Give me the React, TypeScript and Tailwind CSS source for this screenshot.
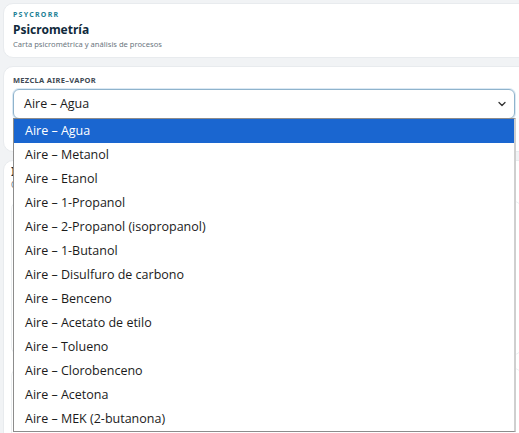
import { ChevronDown } from "lucide-react";

const mezclas = [
  "Aire – Agua",
  "Aire – Metanol",
  "Aire – Etanol",
  "Aire – 1-Propanol",
  "Aire – 2-Propanol (isopropanol)",
  "Aire – 1-Butanol",
  "Aire – Disulfuro de carbono",
  "Aire – Benceno",
  "Aire – Acetato de etilo",
  "Aire – Tolueno",
  "Aire – Clorobenceno",
  "Aire – Acetona",
  "Aire – MEK (2-butanona)",
];

export default function App() {
  return (
    <div className="relative w-[519px] h-[433px] overflow-hidden bg-[#f1f3f5] font-['Noto_Sans',sans-serif]">
      <div className="w-[530px] pl-[3px] pt-[3px] flex flex-col gap-[8px]">
        {/* header */}
        <div className="h-[55px] bg-white rounded-[10px] border border-[#e8ebee] px-[9px] pt-[6px]">
          <div className="text-[7px] font-bold tracking-[0.18em] text-[#1c7f95] leading-[10px]">PSYCRORR</div>
          <h1 className="mt-[2px] text-[12px] font-bold text-[#102a3c] leading-[16px]">Psicrometría</h1>
          <p className="mt-[1px] text-[7.6px] text-[#6b7680] leading-[11px]">Carta psicrométrica y análisis de procesos</p>
        </div>

        {/* mezcla */}
        <div className="h-[86px] bg-white rounded-[10px] border border-[#e8ebee] px-[9px] pt-[8px]">
          <div className="text-[7.5px] font-bold tracking-[0.04em] text-[#3f4a54] leading-[10px]">MEZCLA AIRE–VAPOR</div>
          <div className="mt-[4px] h-[30px] w-[502px] rounded-[6px] border border-[#8fb3cc] shadow-[0_0_0_1px_#dbe9f4] flex items-center justify-between pl-[10px] pr-[6px] text-[12.5px] text-[#1b1b1b] font-['Open_Sans',sans-serif]">
            <span>Aire – Agua</span>
            <ChevronDown size={12} strokeWidth={2.6} className="text-[#333]" />
          </div>
        </div>

        {/* carta (behind popup) */}
        <div className="bg-white rounded-[10px] border border-[#e8ebee] px-[7px] pt-[2px] h-[300px]">
          <h2 className="text-[13px] font-bold text-[#102a3c] leading-[17px]">I</h2>
          <p className="text-[8px] text-[#6b7680] leading-[10px]">C</p>
          <div className="mt-[11px] h-[154px] rounded-[8px] border border-[#eceff1]" />
          <div className="mt-[13px] h-[120px] rounded-[8px] border border-[#eceff1]" />
        </div>
      </div>

      {/* native select popup */}
      <div className="absolute left-[13px] top-[118px] w-[503px] bg-white border border-[#8c8c8c] border-r-[#cfcfcf] border-r-2 font-['Open_Sans',sans-serif]">
        {mezclas.map((m, i) => (
          <div
            key={m}
            className={`h-[24px] flex items-center pl-[11px] text-[12.5px] ${i === 0 ? "bg-[#1a66d0] text-white" : "text-[#1b1b1b]"}`}
          >
            {m}
          </div>
        ))}
      </div>
    </div>
  );
}
